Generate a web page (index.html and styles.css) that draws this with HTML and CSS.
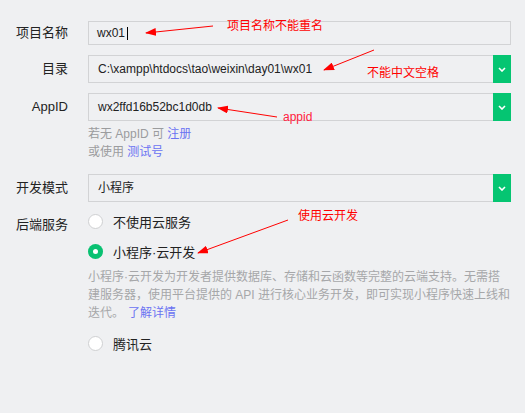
FILE: index.html
```html
<!DOCTYPE html>
<html lang="zh-CN">
<head>
<meta charset="utf-8">
<title>新建项目</title>
<link rel="stylesheet" href="styles.css">
</head>
<body>
<div class="page">
  <form class="form">
    <div class="field f-name">
      <label class="label">项目名称</label>
      <div class="control">
        <div class="input">wx01<span class="caret"></span></div>
      </div>
    </div>
    <div class="field f-dir">
      <label class="label">目录</label>
      <div class="control">
        <div class="select">
          <span class="select-value">C:\xampp\htdocs\tao\weixin\day01\wx01</span>
          <span class="select-btn"><svg width="8" height="5" viewBox="0 0 8 5"><path d="M1 1 L4 4 L7 1" fill="none" stroke="#fff" stroke-width="1.6"/></svg></span>
        </div>
      </div>
    </div>
    <div class="field f-appid">
      <label class="label">AppID</label>
      <div class="control">
        <div class="select">
          <span class="select-value">wx2ffd16b52bc1d0db</span>
          <span class="select-btn"><svg width="8" height="5" viewBox="0 0 8 5"><path d="M1 1 L4 4 L7 1" fill="none" stroke="#fff" stroke-width="1.6"/></svg></span>
        </div>
        <p class="hint">若无 AppID 可 <a class="link">注册</a><br>或使用 <a class="link">测试号</a></p>
      </div>
    </div>
    <div class="field f-mode">
      <label class="label">开发模式</label>
      <div class="control">
        <div class="select">
          <span class="select-value">小程序</span>
          <span class="select-btn"><svg width="8" height="5" viewBox="0 0 8 5"><path d="M1 1 L4 4 L7 1" fill="none" stroke="#fff" stroke-width="1.6"/></svg></span>
        </div>
      </div>
    </div>
    <div class="field f-backend">
      <label class="label label-top">后端服务</label>
      <div class="control">
        <div class="radio"><span class="circle"></span><span>不使用云服务</span></div>
        <div class="radio"><span class="circle checked"></span><span>小程序·云开发</span></div>
        <p class="desc">小程序·云开发为开发者提供数据库、存储和云函数等完整的云端支持。无需搭建服务器，使用平台提供的 API 进行核心业务开发，即可实现小程序快速上线和迭代。<a class="link more">了解详情</a></p>
        <div class="radio radio-last"><span class="circle"></span><span>腾讯云</span></div>
      </div>
    </div>
  </form>

  <div class="notes">
    <svg class="arrows" width="525" height="413" viewBox="0 0 525 413">
      <defs>
        <marker id="ah" markerWidth="11" markerHeight="8" refX="10" refY="4" orient="auto" markerUnits="userSpaceOnUse">
          <path d="M0 0 L11 4 L0 8 Z" fill="#ff0000"/>
        </marker>
      </defs>
      <line x1="213" y1="26" x2="146" y2="33" stroke="#ff0000" stroke-width="1" marker-end="url(#ah)"/>
      <line x1="374" y1="50" x2="324" y2="70" stroke="#ff0000" stroke-width="1" marker-end="url(#ah)"/>
      <line x1="277" y1="117" x2="218" y2="108" stroke="#ff0000" stroke-width="1" marker-end="url(#ah)"/>
      <line x1="288" y1="220" x2="198" y2="253" stroke="#ff0000" stroke-width="1" marker-end="url(#ah)"/>
    </svg>
    <span class="note n1">项目名称不能重名</span>
    <span class="note n2">不能中文空格</span>
    <span class="note n3">appid</span>
    <span class="note n4">使用云开发</span>
  </div>
</div>
</body>
</html>
```

FILE: styles.css
```css
* { box-sizing: border-box; }
html, body { margin: 0; padding: 0; }
body {
  background: #eff0f2;
  font-family: "Liberation Sans", "Noto Sans CJK SC", sans-serif;
  font-size: 13px;
  color: #222;
}
.page {
  position: relative;
  width: 525px;
  height: 413px;
  overflow: hidden;
}
.form {
  margin: 0;
  padding: 21px 0 0 8px;
  display: flex;
  flex-direction: column;
}
.field {
  display: grid;
  grid-template-columns: 60px 423px;
  column-gap: 20px;
  align-items: start;
}
.label {
  text-align: right;
  line-height: 18px;
  color: #222;
  white-space: nowrap;
}
.f-name .label { margin-top: 3px; }
.f-dir, .f-appid { margin-top: 10px; }
.f-dir .label, .f-appid .label, .f-mode .label { margin-top: 5px; }
.f-mode { margin-top: 13px; }
.f-backend { margin-top: 4px; }
.label-top { margin-top: 10px; }

.input {
  height: 24px;
  border: 1px solid #d2d3d5;
  padding-left: 8px;
  font-size: 12px;
  line-height: 22px;
  color: #222;
  display: flex;
  align-items: center;
}
.caret {
  display: inline-block;
  width: 1px;
  height: 13px;
  background: #000;
  margin-left: 2px;
}
.select {
  height: 28px;
  display: flex;
  border-top: 1px solid #d2d3d5;
  border-bottom: 1px solid #d2d3d5;
  border-left: 1px solid #d2d3d5;
}
.select-value {
  flex: 1;
  padding-left: 9px;
  font-size: 12px;
  line-height: 26px;
  color: #222;
  white-space: nowrap;
}
.select-btn {
  width: 18px;
  margin: -1px 0;
  background: #05c572;
  display: flex;
  align-items: center;
  justify-content: center;
}
.select-btn svg { display: block; }

.hint {
  margin: 4px 0 0;
  font-size: 12px;
  line-height: 18px;
  color: #9b9c9e;
}
.link { color: #6b73f2; text-decoration: none; }
.more { margin-left: 4px; }

.radio {
  height: 30px;
  display: flex;
  align-items: center;
  gap: 10px;
  font-size: 13px;
  color: #222;
}
.radio-last { margin-top: 6px; }
.circle {
  width: 15px;
  height: 15px;
  border-radius: 50%;
  border: 1px solid #cfd0d2;
  background: #fff;
  position: relative;
  flex: none;
}
.circle.checked {
  border: none;
  background: #09c172;
}
.circle.checked::after {
  content: "";
  position: absolute;
  left: 5px;
  top: 5px;
  width: 5px;
  height: 5px;
  border-radius: 50%;
  background: #fff;
}
.desc {
  margin: 2px 0 0;
  font-size: 12px;
  line-height: 18px;
  color: #a6a7a9;
}

.notes {
  position: absolute;
  left: 0;
  top: 0;
  width: 525px;
  height: 413px;
  pointer-events: none;
}
.arrows { position: absolute; left: 0; top: 0; }
.note {
  position: absolute;
  font-size: 12px;
  line-height: 14px;
  color: #ff0000;
  white-space: nowrap;
}
.n1 { left: 227px; top: 19px; }
.n2 { left: 367px; top: 66px; }
.n3 { left: 283px; top: 110px; color: #ff2040; }
.n4 { left: 298px; top: 209px; }
```
